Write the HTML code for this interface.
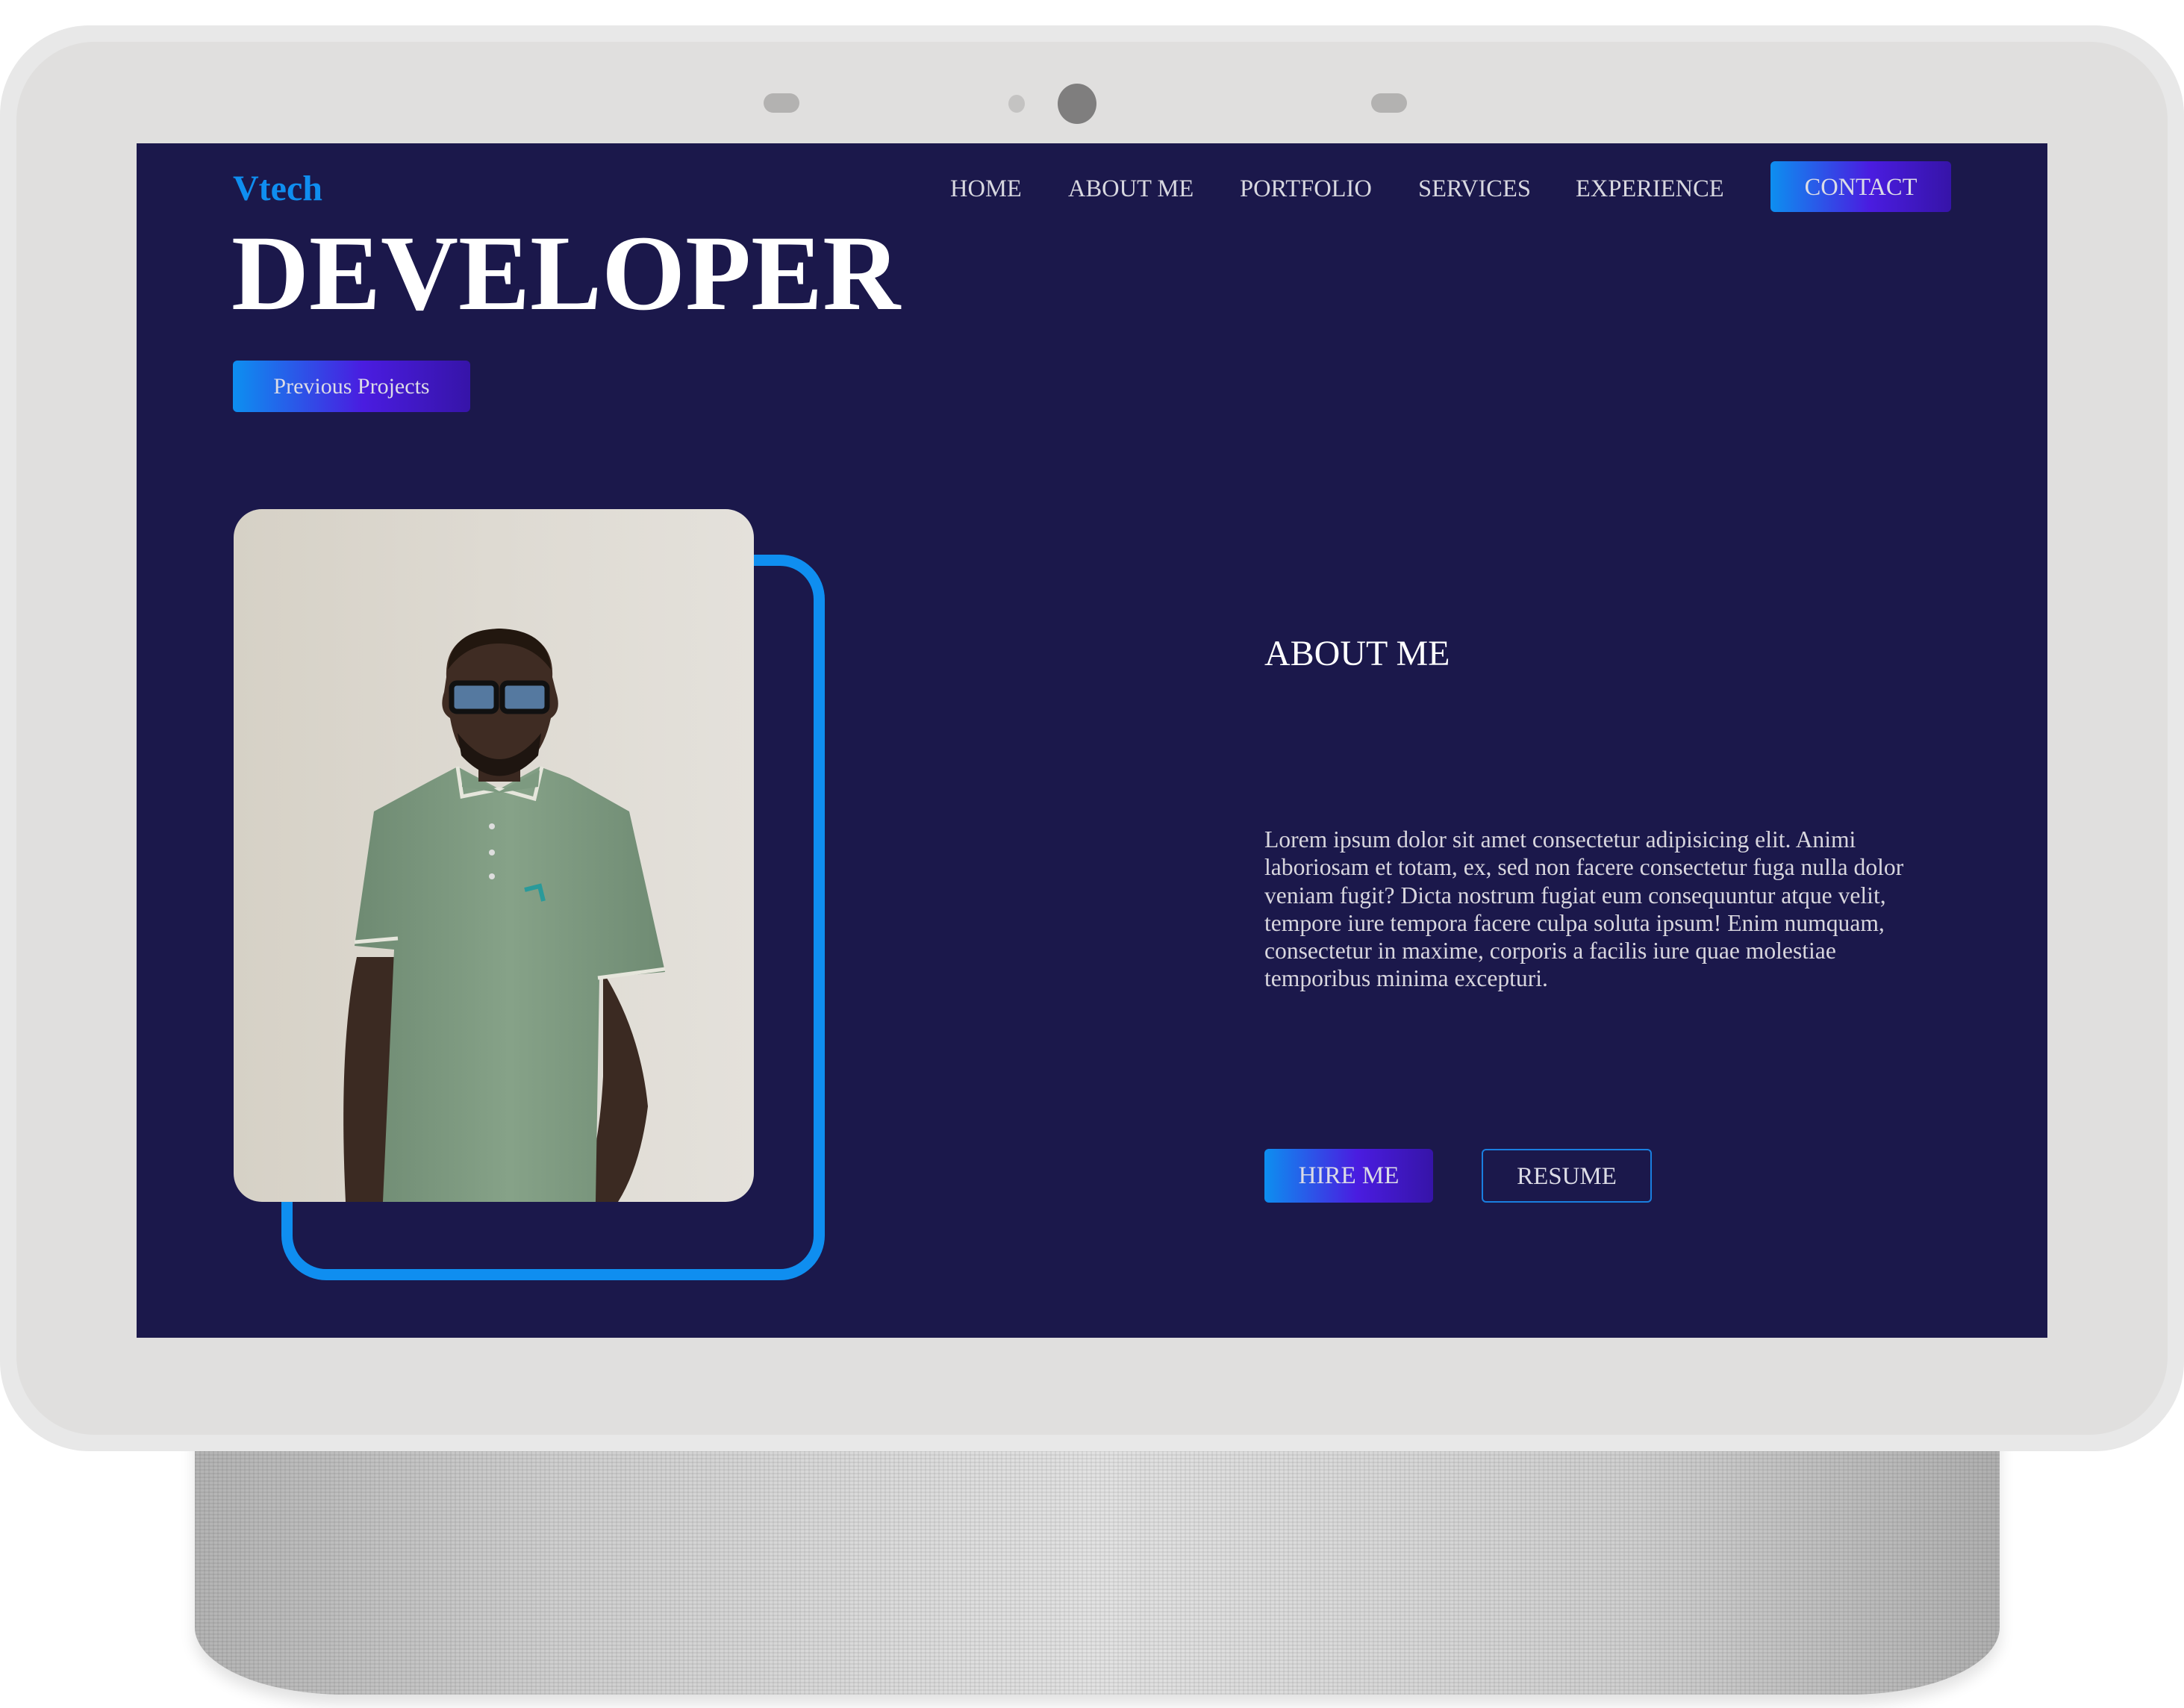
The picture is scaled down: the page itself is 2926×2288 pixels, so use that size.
<!DOCTYPE html>
<html><head><meta charset="utf-8"><style>
*{margin:0;padding:0;box-sizing:border-box}
body{width:2926px;height:2288px;background:#fff;position:relative;overflow:hidden;font-family:"Liberation Serif",serif}
.abs{position:absolute}
.base{left:261px;top:1900px;width:2418px;height:370px;border-radius:0 0 200px 200px / 0 0 90px 90px;background:linear-gradient(90deg,#b4b4b4 0%,#cfcfcf 20%,#e2e2e2 50%,#cfcfcf 80%,#b0b0b0 100%);box-shadow:0 12px 20px rgba(0,0,0,.12)}
.base:after{content:"";position:absolute;inset:0;border-radius:inherit;background:repeating-linear-gradient(0deg,rgba(0,0,0,.06) 0 2px,transparent 2px 5px),repeating-linear-gradient(90deg,rgba(0,0,0,.05) 0 2px,transparent 2px 6px)}
.body{left:0;top:34px;width:2926px;height:1910px;border-radius:120px;background:#e8e8e8}
.inner{left:22px;top:56px;width:2882px;height:1866px;border-radius:105px;background:#e0dfde}
.screen{left:183px;top:192px;width:2560px;height:1600px;background:#1b184b;overflow:hidden}
.grad{background:linear-gradient(90deg,#0d8ff0 0%,#4a1ce0 55%,#3614a8 100%);border-radius:6px}
.nav{top:235px;font-size:32.5px;color:#d8d8e0;line-height:36px}
.btn{color:#dcdce6;text-align:center}
</style></head><body>
<div class="abs base"></div>
<div class="abs body"></div>
<div class="abs inner"></div>
<div class="abs" style="left:1023px;top:125px;width:48px;height:26px;border-radius:13px;background:#b3b2b1"></div>
<div class="abs" style="left:1351px;top:127px;width:22px;height:24px;border-radius:50%;background:#c4c3c2"></div>
<div class="abs" style="left:1417px;top:112px;width:52px;height:54px;border-radius:50%;background:#7f7e7e"></div>
<div class="abs" style="left:1837px;top:125px;width:48px;height:26px;border-radius:13px;background:#b3b2b1"></div>

<div class="abs screen"></div>
<div class="abs" style="left:183px;top:192px;width:2560px;height:1600px;overflow:hidden">
  <div class="abs" style="left:135px;top:-66px;font-size:60px;font-weight:bold;color:#c8c8d0;letter-spacing:10px;white-space:nowrap">FULL STACK WEB</div>
</div>

<div class="abs" style="left:312px;top:226px;font-size:48px;font-weight:bold;color:#0f8ef0;line-height:54px">Vtech</div>
<div class="abs nav" style="left:1273px">HOME</div>
<div class="abs nav" style="left:1431px">ABOUT ME</div>
<div class="abs nav" style="left:1661px">PORTFOLIO</div>
<div class="abs nav" style="left:1900px">SERVICES</div>
<div class="abs nav" style="left:2111px">EXPERIENCE</div>
<div class="abs grad btn" style="left:2372px;top:216px;width:242px;height:68px;font-size:32.5px;line-height:70px">CONTACT</div>

<div class="abs" style="left:310px;top:282px;font-size:144px;font-weight:bold;color:#fff;line-height:170px;white-space:nowrap">DEVELOPER</div>
<div class="abs grad btn" style="left:312px;top:483px;width:318px;height:69px;font-size:30px;line-height:69px">Previous Projects</div>

<div class="abs" style="left:377px;top:743px;width:728px;height:972px;border:15px solid #0f8ef0;border-radius:60px"></div>
<div class="abs" style="left:313px;top:682px;width:697px;height:928px;border-radius:38px;overflow:hidden">
<svg width="697" height="928" viewBox="0 0 697 928">
<defs><linearGradient id="w" x1="0" x2="1"><stop offset="0" stop-color="#d6d1c6"/><stop offset=".5" stop-color="#dedad2"/><stop offset="1" stop-color="#e4e1db"/></linearGradient>
<linearGradient id="s" x1="0" x2="1"><stop offset="0" stop-color="#6e8a72"/><stop offset=".5" stop-color="#86a288"/><stop offset="1" stop-color="#6f8b73"/></linearGradient></defs>
<rect width="697" height="928" fill="url(#w)"/>
<path d="M165 600 Q140 720 150 928 L215 928 L222 600 Z" fill="#3b2a22"/>
<path d="M495 620 Q545 700 555 800 Q545 880 515 928 L465 928 Q490 860 495 760 Z" fill="#3b2a22"/>
<path d="M262 365 L300 345 L356 375 L410 345 L450 360 L530 405 L578 620 L490 628 L485 928 L200 928 L215 590 L162 585 L188 405 Z" fill="url(#s)"/>
<path d="M162 580 L220 575" stroke="#e6e6dc" stroke-width="5"/>
<path d="M488 628 L578 616" stroke="#e6e6dc" stroke-width="5"/>
<path d="M300 345 L306 385 L356 375 L403 388 L413 345" stroke="#e6e6dc" stroke-width="5" fill="none"/>
<path d="M306 350 L356 378 L410 350 L408 372 L356 380 L306 372 Z" fill="#7d9a80"/>
<rect x="328" y="320" width="56" height="45" fill="#3a2820"/>
<path d="M285 225 Q282 165 356 160 Q430 165 427 225 L432 245 Q440 270 425 280 Q410 350 356 355 Q302 350 290 280 Q274 270 282 245 Z" fill="#3f2c23"/>
<path d="M287 215 Q290 162 356 160 Q422 162 425 215 Q400 180 356 180 Q312 180 287 215 Z" fill="#22170f"/>
<path d="M300 300 Q356 370 412 300 L408 330 Q356 385 305 330 Z" fill="#1e1510"/>
<rect x="292" y="233" width="60" height="38" rx="7" fill="#5579a0" stroke="#111" stroke-width="7"/>
<rect x="360" y="233" width="60" height="38" rx="7" fill="#5579a0" stroke="#111" stroke-width="7"/>
<circle cx="346" cy="425" r="4" fill="#ddd"/><circle cx="346" cy="460" r="4" fill="#ddd"/><circle cx="346" cy="492" r="4" fill="#ddd"/>
<path d="M390 510 L410 505 L415 525" stroke="#2a9a9a" stroke-width="6" fill="none"/>
</svg></div>

<div class="abs" style="left:1694px;top:848px;font-size:48px;color:#fff;line-height:56px">ABOUT ME</div>
<div class="abs" style="left:1694px;top:1106px;width:900px;font-size:31.6px;line-height:37.3px;color:#d8d6de;white-space:nowrap">Lorem ipsum dolor sit amet consectetur adipisicing elit. Animi<br>laboriosam et totam, ex, sed non facere consectetur fuga nulla dolor<br>veniam fugit? Dicta nostrum fugiat eum consequuntur atque velit,<br>tempore iure tempora facere culpa soluta ipsum! Enim numquam,<br>consectetur in maxime, corporis a facilis iure quae molestiae<br>temporibus minima excepturi.</div>
<div class="abs grad btn" style="left:1694px;top:1539px;width:226px;height:72px;font-size:33px;line-height:72px">HIRE ME</div>
<div class="abs btn" style="left:1985px;top:1539px;width:228px;height:72px;font-size:33px;line-height:70px;border:2px solid #1a7fe0;border-radius:6px">RESUME</div>
</body></html>
